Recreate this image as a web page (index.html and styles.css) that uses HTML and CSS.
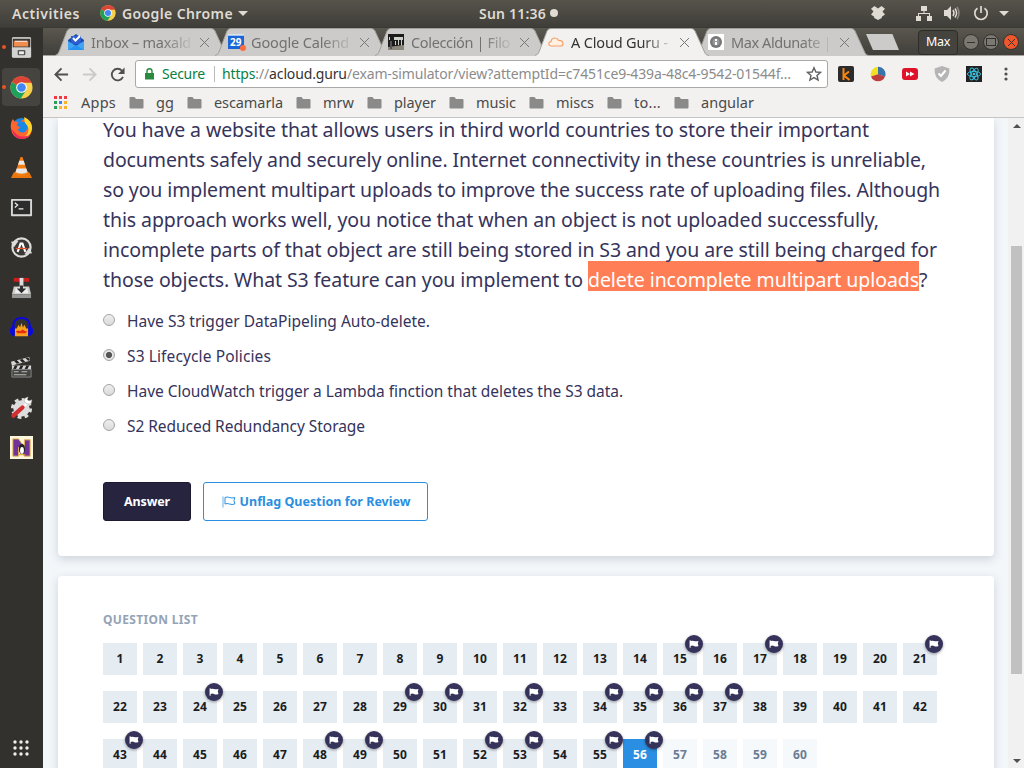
FILE: index.html
```html
<!DOCTYPE html>
<html lang="en">
<head>
<meta charset="utf-8">
<title>A Cloud Guru - Exam Simulator</title>
<link rel="stylesheet" href="styles.css">
</head>
<body>
<svg width="0" height="0" class="defs">
  <symbol id="chrome" viewBox="0 0 24 24"><circle cx="12" cy="12" r="11.5" fill="#f9d04b"/><path d="M12 12 2 6.2A11.5 11.5 0 0 0 11.2 23.5L17 14.5z" fill="#1da15c"/><path d="M12 12 2 6.2A11.5 11.5 0 0 1 22.6 7H12z" fill="#dc4437"/><circle cx="12" cy="12" r="5.6" fill="#fff"/><circle cx="12" cy="12" r="4.5" fill="#4285f4"/></symbol>
  <symbol id="folder" viewBox="0 0 15 13"><path d="M1.5 1H5.5L7 3H13.5Q14.5 3 14.5 4V11.5Q14.5 12.5 13.5 12.5H1.5Q.5 12.5 .5 11.5V2Q.5 1 1.5 1z" fill="#8a8a8a"/></symbol>
  <symbol id="tab" viewBox="0 0 174 28"><path d="M0 27.5 Q3 27 4 24L12 3Q13 .5 16 .5H156Q159 .5 160 3L170 25Q171 27.5 174 27.5V28H0z" fill="currentColor"/><path d="M0 27.5 Q3 27 4 24L12 3Q13 .5 16 .5H156Q159 .5 160 3L170 25Q171 27.5 174 27.5" fill="none" stroke="#a3a19d"/></symbol>
  <symbol id="flag" viewBox="0 0 10 8"><path d="M.6 .2H1.6V1Q3.3 .3 5 1T9.5 1L8.8 3.4 9.5 6Q7 7 5 6T1.6 6V7.8H.6z" fill="#fff"/></symbol>
</svg>

<header class="topbar">
  <span class="activities" data-w="68">Activities</span>
  <svg class="app-ico"><use href="#chrome"/></svg>
  <span class="app-name" data-w="111">Google Chrome</span>
  <i class="caret"></i>
  <span class="clock"><span data-w="67">Sun 11:36</span><i></i></span>
  <div class="tray">
    <svg width="16" height="14" viewBox="0 0 16 14"><path d="M4.5 0 8 2.500 11.500 0 15 2.800 12.500 5.600 15 8.500 11.800 10.800V12L8 14 4.200 12V10.800L1 8.500 3.500 5.600 1 2.800z" fill="#dfdbd2"/></svg>
    <svg width="16" height="16" viewBox="0 0 16 16" fill="#dfdbd2"><path d="M5 1h6v5H5zM0 11h5v5H0zM11 11h5v5h-5zM7.500 6h1v3h-1zM2 8h12v3h-1V9H3v2H2z"/></svg>
    <svg width="16" height="14" viewBox="0 0 16 14"><path d="M0 4h3l4-4v14L3 10H0z" fill="#dfdbd2"/><path d="M9 4q2 3 0 6M11 2.500q3.200 4.500 0 9" fill="none" stroke="#dfdbd2" stroke-width="1.500"/><path d="M13 1q4 6 0 12" fill="none" stroke="#8c8982" stroke-width="1.500"/></svg>
    <svg width="16" height="16" viewBox="0 0 16 16" fill="none" stroke="#dfdbd2" stroke-width="1.700"><path d="M4.500 3.200A6.200 6.200 0 1 0 11.500 3.200M8 1v7"/></svg>
    <i class="caret"></i>
  </div>
</header>

<div class="desk">
<nav class="dock">
  <div class="slot run"><svg viewBox="0 0 24 24"><rect x="2" y="1" width="20" height="22" rx="1.500" fill="#bcbcba"/><rect x="3" y="3" width="18" height="9" fill="#3d3835"/><path d="M4 5h15v2H4z" fill="#cf5a2a"/><path d="M5 6h14v5H4V6z" fill="#ef8c4e"/><path d="M5 5h13v1H5z" fill="#fff"/><rect x="2" y="12" width="20" height="10" fill="#d3d3d1"/><rect x="8" y="14.500" width="8" height="5.500" rx="1" fill="#565653"/><rect x="9.500" y="16" width="5" height="3" fill="#eee"/></svg></div>
  <div class="slot run active"><svg><use href="#chrome"/></svg></div>
  <div class="slot"><svg viewBox="0 0 24 24"><circle cx="12" cy="12" r="10" fill="#1787e8"/><path d="M11 6q5-5 8-2 5 4 4 11-2 9-11 9Q2 23 1 13 0 7 3 3l2 3 4 0-2 4 4 2-3 2q4 6 9 1 4-5-1-9z" fill="#ff652c"/><path d="M15 1q8 4 8 12-2 9-9 10 8-6 4-13-4-4-3-9z" fill="#ffd42a"/><path d="M2 14q1 9 10 10 5 0 8-4-10 4-15-3z" fill="#f02b5c"/></svg></div>
  <div class="slot"><svg viewBox="0 0 24 24"><path d="M4 17h16l3 6H1z" fill="#e9750c"/><path d="M11 1h2l6 18q-7 4-14 0z" fill="#f07c12"/><path d="M9.700 5h4.600l1.300 4H8.400zM7 13h10l1.400 4Q12 20 5.600 17z" fill="#e8e8e8"/></svg></div>
  <div class="slot"><svg viewBox="0 0 24 24"><rect x="1" y="3" width="22" height="18" rx="1" fill="#d8d8d6"/><rect x="3" y="5" width="18" height="14" fill="#2c2c2c"/><path d="M5 7l3 2.500L5 12M9 13.500h5" fill="none" stroke="#eee" stroke-width="1.300"/></svg></div>
  <div class="slot"><svg viewBox="0 0 24 24"><circle cx="12" cy="12" r="9.500" fill="#3a3936" stroke="#dcdcda" stroke-width="2.200"/><path d="M1 6l8-1-5 7zM23 18l-8 1 5-7z" fill="#dcdcda"/><path d="M8 16.500 11 8h2l3 8.500" fill="none" stroke="#fff" stroke-width="2.200"/><path d="M6 13h12" stroke="#e4572e" stroke-width="1.300"/></svg></div>
  <div class="slot"><svg viewBox="0 0 24 24"><path d="M4 11h16l2 8H2z" fill="#c9c9c7"/><path d="M2 19h20v4H2z" fill="#969694"/><path d="M6 12h12l1 6H5z" fill="#eee"/><path d="M4 2h16v4H4z" fill="#c9201d"/><path d="M10 2h4v9h-4z" fill="#ddd"/><path d="M10.500 10h3v3H17l-5 5-5-5h3.500z" fill="#2b2b2b"/></svg></div>
  <div class="slot"><svg viewBox="0 0 24 24"><path d="M3 13Q3 2 12 2t9 11" fill="none" stroke="#0a0ae0" stroke-width="2"/><path d="M5 21V13l2 0 2-4 1.500 3L12 7l1.500 5L15 9l2 4 2 0v8z" fill="#f6a01d"/><path d="M6 16l3-1 2 1 2-2 3 2 2 0-2 2H8z" fill="#e92a12"/><path d="M0 14q1-3 5-4v11q-4 0-5-4zM24 14q-1-3-5-4v11q4 0 5-4z" fill="#0a0ae0"/></svg></div>
  <div class="slot"><svg viewBox="0 0 24 24"><path d="M1 6 20 1l1 4L2 10zM2 10h20v4H2z" fill="#d6d6d4"/><path d="M4 5l3 3 3-.8-3-3zM10 4l3 3 3-.8-3-3zM16 2l3 3 2-.5-2-3zM5 10h3l-2 4H3zM11 10h3l-2 4H9zM17 10h3l-2 4h-3z" fill="#222"/><path d="M2 14h20v8H2z" fill="#444441" stroke="#888"/><path d="M4 16h5v1H4zM4 19h13v1H4zM12 16h6v1h-6z" fill="#bbb"/></svg></div>
  <div class="slot"><svg viewBox="0 0 24 24"><circle cx="12" cy="13" r="8.500" fill="#ddd"/><circle cx="12" cy="13" r="9.500" fill="none" stroke="#ddd" stroke-width="3" stroke-dasharray="4 3.460"/><path d="M12 13 19 6" stroke="#f4f4f4" stroke-width="3"/><path d="M16 2q-2 3 0 5t6 1l1-4-3 1-2-1 1-3z" fill="#fff" stroke="#999" stroke-width=".5"/><path d="M3.500 20.500 13 12" stroke="#d12e30" stroke-width="4.500" stroke-linecap="round"/></svg></div>
  <div class="slot"><svg viewBox="0 0 24 24"><path d="M0 0h24v24H0z" fill="#fbf6dc"/><path d="M3 3h6l6 9V4h6v17h-6L9 12v9H3z" fill="#73349a" stroke="#e9b949"/><ellipse cx="12.500" cy="13.500" rx="3.200" ry="5.500" fill="#222"/><ellipse cx="12.500" cy="15" rx="2" ry="3.500" fill="#fff"/><path d="M9 19h7v1H9z" fill="#e9a21b"/></svg></div>
  <div class="dock-space"></div>
  <svg class="grid-ico" viewBox="0 0 16 16" fill="#f0efed"><circle cx="2" cy="2" r="1.700"/><circle cx="8" cy="2" r="1.700"/><circle cx="14" cy="2" r="1.700"/><circle cx="2" cy="8" r="1.700"/><circle cx="8" cy="8" r="1.700"/><circle cx="14" cy="8" r="1.700"/><circle cx="2" cy="14" r="1.700"/><circle cx="8" cy="14" r="1.700"/><circle cx="14" cy="14" r="1.700"/></svg>
</nav>

<main class="browser">
  <div class="tabs">
    <div class="tab"><svg class="shape"><use href="#tab"/></svg><svg class="fav" viewBox="0 0 16 16"><path d="M0 6 8 0l8 6v10H0z" fill="#1a4dad"/><path d="M3 2h10v8H3z" fill="#2a5ed1"/><path d="M5 4l2.500 2.500L12 2" stroke="#fff" stroke-width="2" fill="none"/><path d="M0 7l8 5 8-5v9H0z" fill="#41a5f5"/><path d="M0 16l8-5 8 5z" fill="#2793ee"/></svg><span class="title"><span data-w="100">Inbox – maxald</span></span><b class="close"></b></div>
    <div class="tab"><svg class="shape"><use href="#tab"/></svg><svg class="fav" viewBox="0 0 16 16"><path d="M0 1h16v14H0z" fill="#1a66d6"/><path d="M0 0h16v2H0z" fill="#e4ecf8" opacity=".7"/><text x="2" y="12" class="cal">29</text><circle cx="15" cy="14" r="3" fill="#ff6c3e"/></svg><span class="title"><span data-w="98">Google Calend</span></span><b class="close"></b></div>
    <div class="tab"><svg class="shape"><use href="#tab"/></svg><svg class="fav" viewBox="0 0 16 16"><path d="M0 0h16v16H0z" fill="#1b1b1b"/><path d="M6 3h9v3H6zM1 3h1v3H1zM7 7h1v4H7zM10 6h1v5h-1zM13 6h1v6h-1z" fill="#ccd0c8"/><path d="M0 13l16-2v5H0z" fill="#8b867c"/><path d="M2 7h2v8H2z" fill="#555"/></svg><span class="title"><span data-w="99">Colección | Filo</span></span><b class="close"></b></div>
    <div class="tab active"><svg class="shape"><use href="#tab"/></svg><svg class="fav" viewBox="0 0 16 16"><path d="M3.500 12Q.6 12 .8 9.500 1 7.800 3 7.600 3.500 4 7 4q2.500 0 3.600 2.500Q14 6 15 9q.3 3-2.500 3z" fill="#fff1e4" stroke="#f9a066" stroke-width="1.200"/></svg><span class="title"><span data-w="97">A Cloud Guru -</span></span><b class="close"></b></div>
    <div class="tab"><svg class="shape"><use href="#tab"/></svg><svg class="fav" viewBox="0 0 16 16"><path d="M0 0h16v16H0z" fill="#fff"/><circle cx="8" cy="8" r="6" fill="#777"/><circle cx="8" cy="8" r="3.500" fill="#999"/><path d="M7 5h2v2H7zM7 8h2v3H7z" fill="#fff"/></svg><span class="title"><span data-w="100">Max Aldunate |</span></span><b class="close"></b></div>
    <button class="newtab"></button>
    <button class="user"><span data-w="24">Max</span></button>
    <div class="wm"><i class="min"></i><i class="max"></i><i class="cls"></i></div>
  </div>

  <div class="toolbar">
    <svg class="nav" viewBox="0 0 16 16" stroke="#505050"><path d="M15 8H2M8 1.500 1.500 8 8 14.500"/></svg>
    <svg class="nav" viewBox="0 0 16 16" stroke="#cbcac9"><path d="M1 8H14M8 1.500 14.500 8 8 14.500"/></svg>
    <svg class="nav" viewBox="0 0 16 16" stroke="#505050"><path d="M13.800 10.500A6.200 6.200 0 1 1 12.800 4"/><path d="M15.500 .5v7h-7z" fill="#505050" stroke="none"/></svg>
    <div class="omnibox">
      <svg width="9" height="12" viewBox="0 0 9 12"><path d="M0 5h9v6.500H0z" fill="#2a8a3e"/><path d="M2 5V3q0-2.200 2.500-2.200T7 3v2" fill="none" stroke="#2a8a3e" stroke-width="1.400"/></svg>
      <span class="secure" data-w="43">Secure</span><i class="bar"></i>
      <span class="url" data-w="569"><span class="green">https</span>://<span class="host">acloud.guru</span>/exam-simulator/view?attemptId=c7451ce9-439a-48c4-9542-01544f…</span>
      <svg class="star" viewBox="0 0 16 16"><path d="M8 1.800 9.900 6 14.600 6.400 11 9.500 12.100 14 8 11.600 3.900 14 5 9.500 1.400 6.400 6.100 6z" fill="none" stroke="#606060" stroke-width="1.400"/></svg>
    </div>
    <div class="exts">
      <svg viewBox="0 0 16 16"><rect width="16" height="16" rx="2" fill="#2b2b2b"/><path d="M5.500 2v12M11 5.500 6 9.500 11.500 14" fill="none" stroke="#f98512" stroke-width="2"/></svg>
      <svg viewBox="0 0 16 16"><path d="M8 8.500V.8A7.500 7.500 0 0 0 1 10.500z" fill="#f2df24"/><path d="M8 8.500V.8A7.500 7.500 0 0 1 15.200 10.500z" fill="#3873a9"/><path d="M8 8.200 15 10.500A7.500 7.500 0 0 1 1 10.500z" fill="#bc3d3d"/></svg>
      <svg viewBox="0 0 16 16"><rect y="2" width="16" height="12" rx="3" fill="#de1228"/><path d="M4 5.500 8 8l-4 2.500zM8 5.500 12.500 8 8 10.500z" fill="#fff"/></svg>
      <svg viewBox="0 0 16 16"><path d="M8 0 15.500 2.500Q16 12 8 16 0 12 .5 2.500z" fill="#b5b5b5"/><path d="M4.500 7.500 7 10l4.500-5.500" fill="none" stroke="#fff" stroke-width="2"/></svg>
      <svg viewBox="0 0 16 16"><rect width="16" height="16" fill="#222"/><g fill="none" stroke="#3cc5e8" stroke-width=".9"><ellipse cx="8" cy="8" rx="6.600" ry="2.600"/><ellipse cx="8" cy="8" rx="6.600" ry="2.600" transform="rotate(60 8 8)"/><ellipse cx="8" cy="8" rx="6.600" ry="2.600" transform="rotate(120 8 8)"/></g><circle cx="8" cy="8" r="1.300" fill="#3cc5e8"/></svg>
      <svg viewBox="0 0 16 16" fill="#505050"><circle cx="8" cy="3" r="1.600"/><circle cx="8" cy="8" r="1.600"/><circle cx="8" cy="13" r="1.600"/></svg>
    </div>
  </div>

  <div class="bookmarks">
    <svg class="apps" viewBox="0 0 13 13"><path d="M0 0h3v3H0zM5 0h3v3H5zM10 0h3v3h-3z" fill="#f23845"/><path d="M0 5h3v3H0zM0 10h3v3H0z" fill="#2e9e5b"/><path d="M5 5h3v3H5z" fill="#3c82f0"/><path d="M10 5h3v3h-3zM5 10h3v3H5zM10 10h3v3h-3z" fill="#f8b32a"/></svg>
    <span data-w="35">Apps</span>
    <svg><use href="#folder"/></svg><span data-w="18">gg</span>
    <svg><use href="#folder"/></svg><span data-w="69">escamarla</span>
    <svg><use href="#folder"/></svg><span data-w="31">mrw</span>
    <svg><use href="#folder"/></svg><span data-w="42">player</span>
    <svg><use href="#folder"/></svg><span data-w="40">music</span>
    <svg><use href="#folder"/></svg><span data-w="38">miscs</span>
    <svg><use href="#folder"/></svg><span data-w="27">to...</span>
    <svg><use href="#folder"/></svg><span data-w="53">angular</span>
  </div>

  <div class="viewport">
    <div class="page">
      <section class="card question">
        <div class="prompt">
          <div><span data-w="766">You have a website that allows users in third world countries to store their important</span></div>
          <div><span data-w="823">documents safely and securely online. Internet connectivity in these countries is unreliable,</span></div>
          <div><span data-w="837">so you implement multipart uploads to improve the success rate of uploading files. Although</span></div>
          <div><span data-w="776">this approach works well, you notice that when an object is not uploaded successfully,</span></div>
          <div><span data-w="834">incomplete parts of that object are still being stored in S3 and you are still being charged for</span></div>
          <div><span data-w="485">those objects. What S3 feature can you implement to </span><span class="mark" data-w="331">delete incomplete multipart uploads</span><span data-w="9">?</span></div>
        </div>
        <div class="options">
          <label><i class="radio"></i><span data-w="303">Have S3 trigger DataPipeling Auto-delete.</span></label>
          <label><i class="radio on"></i><span data-w="144">S3 Lifecycle Policies</span></label>
          <label><i class="radio"></i><span data-w="496">Have CloudWatch trigger a Lambda finction that deletes the S3 data.</span></label>
          <label><i class="radio"></i><span data-w="238">S2 Reduced Redundancy Storage</span></label>
        </div>
        <div class="actions">
          <button class="btn dark"><span data-w="46">Answer</span></button>
          <button class="btn line"><svg width="14" height="12" viewBox="0 0 14 12" fill="none" stroke="#2a8fe0"><path d="M1 .5v11" opacity=".7"/><path d="M3 1.500Q5 .5 7.500 1.500T12.800 1.500L12 4.500 12.800 8Q10 9 7.500 8T3 8z"/></svg><span data-w="171">Unflag Question for Review</span></button>
        </div>
      </section>
      <section class="card list">
        <h2><span data-w="95">QUESTION LIST</span></h2>
        <div class="tiles" id="tiles"></div>
      </section>
    </div>
    <div class="scroll"><i class="up"></i><b></b><i class="down"></i></div>
  </div>
</main>
</div>
<script src="page.js"></script>
</body>
</html>
```
FILE: page.js
```js
// Question tiles
var flagged = [15, 17, 21, 24, 29, 30, 32, 34, 35, 36, 37, 43, 48, 49, 52, 53, 55, 56];
var current = 56;
var html = '';
for (var n = 1; n <= 60; n++) {
  var cls = n === current ? ' current' : n > current ? ' unseen' : '';
  html += '<div class="tile' + cls + '"><span data-w="' + (n < 10 ? 7 : 14) + '">' + n + '</span>' +
    (flagged.indexOf(n) >= 0 ? '<i class="badge"><svg><use href="#flag"/></svg></i>' : '') + '</div>';
}
document.getElementById('tiles').innerHTML = html;

// Track each label to its set width
document.querySelectorAll('[data-w]').forEach(function (el) {
  var gap = (el.dataset.w - el.getBoundingClientRect().width) / el.textContent.length;
  el.style.letterSpacing = gap.toFixed(3) + 'px';
});
```
FILE: styles.css
```css
* { box-sizing: border-box; }
body { margin: 0; width: 1024px; height: 768px; overflow: hidden; font-family: "Noto Sans", "Open Sans", sans-serif; color: #36335b; display: flex; flex-direction: column; }
button { font: inherit; padding: 0; }
svg { display: block; flex: none; }
[data-w] { white-space: pre; flex: none; }
.defs { position: absolute; }

.topbar { height: 28px; flex: none; background: linear-gradient(#56534b, #403e39); border-bottom: 1px solid #3b3934; color: #dfdbd2; font-size: 14px; font-weight: 600; line-height: 27px; display: flex; align-items: center; padding: 0 16px 1px 12px; }
.app-ico { width: 16px; height: 16px; margin: 0 6px 0 20px; }
.caret { border: 5px solid transparent; border-top-color: #dfdbd2; border-bottom: 0; }
.app-name + .caret { margin-left: 5px; }
.clock { margin-left: 231px; display: flex; align-items: center; gap: 4px; }
.clock i { width: 8px; height: 8px; border-radius: 50%; background: #dfdbd2; }
.tray { margin-left: auto; display: flex; align-items: center; }
.tray svg:nth-child(1) { margin-right: 30px; }
.tray svg:nth-child(2) { margin-right: 12px; }
.tray svg:nth-child(3) { margin-right: 13px; }
.tray svg:nth-child(4) { margin-right: 10px; }
.tray .caret { margin-right: -1px; }

.desk { display: flex; flex: 1; min-height: 0; }
.dock { width: 43px; flex: none; background: #33312d; display: flex; flex-direction: column; align-items: center; padding-right: 1px; }
.slot { width: 38px; height: 38px; margin: 0 2px 2px 2px; border-radius: 4px; display: flex; align-items: center; justify-content: center; position: relative; flex: none; }
.slot svg { width: 23px; height: 23px; }
.slot.active { background: #464440; }
.slot.run::before { content: ""; position: absolute; left: 0; top: 17px; width: 4px; height: 4px; border-radius: 50%; background: #e95420; }
.dock-space { flex: 1; }
.grid-ico { width: 16px; height: 16px; margin-bottom: 12px; }

.browser { flex: 1; display: flex; flex-direction: column; min-width: 0; background: #f2f1f0; }
.tabs { height: 28px; flex: none; display: flex; align-items: center; padding-left: 12px; background: linear-gradient(#5a574f, #403e39); box-shadow: inset 0 -1px #a3a19d; }
.tab { width: 174px; height: 28px; margin-right: -14px; flex: none; position: relative; display: flex; align-items: center; padding-left: 13px; color: #cdcbc9; isolation: isolate; }
.tab .shape { position: absolute; inset: 0; width: 174px; height: 28px; z-index: -1; }
.tab.active { color: #f2f1f0; z-index: 2; }
.fav { width: 16px; height: 16px; overflow: visible; }
.cal { font: bold 10px "Noto Sans", sans-serif; fill: #fff; }
.title { width: 102px; margin-left: 7px; overflow: hidden; font-size: 14.500px; line-height: 26px; color: #717171; -webkit-mask-image: linear-gradient(90deg, #000 70%, transparent 102%); mask-image: linear-gradient(90deg, #000 70%, transparent 102%); }
.title span { display: block; width: max-content; margin-top: -1px; }
.tab.active .title { color: #333; }
.close { width: 9px; height: 9px; margin-left: 7px; background: linear-gradient(45deg, transparent 46%, #777 47% 53%, transparent 54%), linear-gradient(-45deg, transparent 46%, #777 47% 53%, transparent 54%); }
.newtab { width: 33px; height: 16px; margin: 0 0 0 25px; border: 0; background: #cdcbc9; clip-path: polygon(0 0, 80% 0, 100% 100%, 21% 100%); flex: none; }
.tab + .newtab { margin-left: 11px; }
.user { width: 40px; height: 25px; margin-left: 19px; border: 1px solid #2e2c28; border-radius: 4px; background: #45433e; color: #fff; font-size: 12.500px; line-height: 22px; flex: none; }
.wm { display: flex; gap: 4px; margin-left: 5px; }
.wm i { width: 16px; height: 16px; border-radius: 50%; border: 1px solid #35332f; background: #7b7871; display: flex; align-items: center; justify-content: center; }
.wm i::before { content: ""; }
.wm .min::before { width: 8px; height: 1px; background: #33312d; }
.wm .max::before { width: 8px; height: 6px; border: 1px solid #33312d; }
.wm .cls { background: #f0562b; }
.wm .cls::before { width: 7px; height: 7px; background: linear-gradient(45deg, transparent 43%, #432 44% 56%, transparent 57%), linear-gradient(-45deg, transparent 43%, #432 44% 56%, transparent 57%); }

.toolbar { height: 36px; flex: none; display: flex; align-items: center; padding-left: 11px; }
.nav { width: 15px; height: 15px; margin-right: 13px; fill: none; stroke-width: 2; }
.omnibox { width: 693px; height: 28px; margin-left: -3px; border: 1px solid #a9a8a6; border-radius: 3px; background: #fff; display: flex; align-items: center; padding: 0 5px 0 9px; font-size: 14px; line-height: 24px; color: #8c8c8c; }
.secure { margin-left: 8px; color: #0b8043; }
.bar { width: 1px; height: 16px; margin: 0 7px 0 9px; background: #bbb; }
.green { color: #0b8043; }
.host { color: #333; }
.star { width: 16px; height: 16px; margin-left: auto; }
.exts { display: flex; gap: 16px; margin-left: 10px; }
.exts svg { width: 16px; height: 16px; }

.bookmarks { height: 26px; flex: none; display: flex; align-items: center; padding: 0 0 5px 11px; border-bottom: 1px solid #c6c5c3; font-size: 14.500px; line-height: 20px; color: #4a4a4a; }
.bookmarks svg { width: 15px; height: 13px; margin: 0 12px 0 13px; }
.bookmarks .apps { width: 13px; margin: 0 14px 0 0; }

.viewport { flex: 1; display: flex; min-height: 0; background: #f3f7fa; }
.page { width: 965px; padding: 0 14px 0 15px; overflow: hidden; }
.card { background: #fff; box-shadow: 0 3px 10px rgba(40, 50, 80, .18); padding: 0 45px; }
.question { height: 438px; border-radius: 0 0 4px 4px; display: flow-root; }
.prompt { margin-top: -3px; font-size: 19.500px; line-height: 30px; position: relative; z-index: 0; }
.prompt div { height: 30px; white-space: nowrap; display: flex; }
.mark { color: #fff; position: relative; }
.mark::before { content: ""; position: absolute; inset: -4px 0 4px 0; background: #ff7e55; z-index: -1; }
.options { padding-top: 9px; font-size: 15.500px; line-height: 35px; }
.options label { display: flex; height: 35px; }
.radio { width: 12px; height: 12px; margin: 10px 12px 0 0; border: 1px solid #a5a5a5; border-radius: 50%; background: linear-gradient(#eee, #dadada); flex: none; }
.radio.on { background: radial-gradient(circle, #555 0 2.700px, #e4e4e4 3.500px); }
.actions { display: flex; gap: 12px; margin-top: 38px; }
.btn { height: 39px; border-radius: 3px; font-size: 12.500px; font-weight: 700; display: flex; align-items: center; justify-content: center; }
.dark { width: 88px; border: 1px solid #1b1a30; background: #26243f; color: #fff; }
.line { width: 225px; border: 1px solid #2a8fe0; background: #fff; color: #2a8fe0; gap: 4px; padding-left: 1px; }
.list { height: 240px; margin-top: 20px; padding-top: 34px; border-radius: 4px; }
.list h2 { margin: 0; font-size: 12px; line-height: 19px; font-weight: 700; color: #94a3b5; }
.tiles { display: grid; grid-template-columns: repeat(21, 34px); grid-auto-rows: 32px; gap: 16px 6px; margin-top: 14px; font-size: 12px; font-weight: 700; color: #1c1c1c; }
.tile { background: #e5ecf2; display: flex; align-items: center; justify-content: center; position: relative; padding-bottom: 2px; }
.tile.current { background: #2a8fe3; color: #fff; }
.tile.unseen { background: #f5f9fc; color: #6b7c92; }
.badge { position: absolute; left: 22px; top: -8px; width: 18px; height: 18px; border-radius: 50%; background: #36335b; box-shadow: 0 1px 3px rgba(0, 0, 0, .4); display: flex; align-items: center; justify-content: center; z-index: 1; }
.badge svg { width: 10px; height: 8px; }
.scroll { width: 16px; background: #f1f1f1; display: flex; flex-direction: column; align-items: center; padding: 6px 0 5px 1px; }
.scroll b { width: 11px; height: 428px; margin-top: 118px; background: #c1c1c1; }
.scroll i { border: 4px solid transparent; }
.scroll .up { border-bottom-color: #505050; border-top: 0; }
.scroll .down { border-top-color: #505050; border-bottom: 0; margin-top: auto; }
```
